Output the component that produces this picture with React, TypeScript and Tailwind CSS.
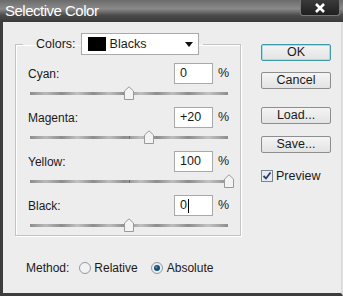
import React from 'react';

const font = "font-['Liberation_Sans',Arial,sans-serif]";

const Slider = ({ pos }: { pos: number }) => (
  <div className="relative ml-[2px] mt-[8px] h-[3px] w-[198px] bg-[linear-gradient(90deg,#8d8d8d,#b9b9b9_8%,#8d8d8d_16%,#c2c2c2_24%,#8d8d8d_32%,#bdbdbd_40%,#8d8d8d_48%,#c0c0c0_56%,#8d8d8d_64%,#bdbdbd_72%,#8d8d8d_80%,#c3c3c3_90%,#8d8d8d)]">
    <div className="absolute left-[99px] top-0 h-[3px] w-px bg-[#6d6d6d]" />
    <svg
      className="absolute top-[-6px]"
      style={{ left: pos - 6 }}
      width="12"
      height="14"
      viewBox="0 0 12 14"
    >
      <path d="M1.5 13.5V5L6 0.8 10.5 5v8.5z" fill="#f3f3f3" stroke="#9a9a9a" />
    </svg>
  </div>
);

const Row = ({ label, value, pos, caret, last }: { label: string; value: string; pos: number; caret?: boolean; last?: boolean }) => (
  <div className="flex flex-col">
    <div className="flex h-[21px] items-center">
      <span className="w-[146px] text-[12px] text-[#1a1a1a]">{label}</span>
      <div className="flex h-[21px] w-[39px] items-center border border-[#a9a9a9] bg-white pl-[5px] text-[12.5px] text-[#1a1a1a]">
        {value}
        {caret && <span className="ml-px h-[14px] w-px bg-black" />}
      </div>
      <span className="ml-[5px] text-[12.5px] text-[#1a1a1a]">%</span>
    </div>
    <Slider pos={pos} />
    <div className={last ? 'h-[8px]' : 'h-[12px]'} />
  </div>
);

const Btn = ({ children, ok }: { children: React.ReactNode; ok?: boolean }) => (
  <button
    className={`h-[17px] w-[70px] rounded-[2px] border text-[12.5px] leading-none text-[#1a1a1a] bg-[linear-gradient(#f4f4f4,#e3e3e3)] ${
      ok ? 'border-[#3c9aa8] shadow-[inset_0_0_0_1px_#a8dde4]' : 'border-[#8e8e8e]'
    }`}
  >
    {children}
  </button>
);

const Radio = ({ on }: { on?: boolean }) => (
  <svg width="12" height="12" viewBox="0 0 12 12">
    <circle cx="6" cy="6" r="5.5" fill={on ? '#e6eef3' : '#f2f2f2'} stroke="#8e9aa2" />
    {on && <circle cx="6" cy="6" r="3" fill="#1e4d73" />}
    {on && <circle cx="5.3" cy="5.3" r="1" fill="#6f9bc0" />}
  </svg>
);

export default function App() {
  return (
    <div className={`${font} flex h-[296px] w-[343px] flex-col bg-[#ededed] border-l-[3px] border-b-[3px] border-r-[2px] border-[#3d3d3d] border-r-[#dcdcdc]`}>
      {/* Title bar */}
      <div className="flex h-[22px] shrink-0 items-start justify-between bg-[linear-gradient(#6b6b6b,#8a8a8a_40%,#4a4a4a_70%,#3a3a3a)] -ml-[3px] -mr-[2px]">
        <span className="ml-[5px] mt-[1px] text-[15px] leading-[20px] tracking-[-0.5px] text-white [font-family:'Liberation_Sans_Narrow','Liberation_Sans',sans-serif]">
          Selective Color
        </span>
        <div className="mr-[3px] flex h-[16px] w-[40px] items-center justify-center rounded-b-[3px] border border-t-0 border-[#777] bg-[linear-gradient(#3a3a3a,#202020)]">
          <svg width="12" height="10" viewBox="0 0 12 10">
            <path d="M2 1l8 8M10 1L2 9" stroke="#fff" strokeWidth="2.6" />
          </svg>
        </div>
      </div>

      <div className="flex flex-1">
        {/* Left column */}
        <div className="flex flex-col">
          <fieldset className="ml-[12px] mt-[11px] w-[226px] border border-[#c3c3c3] pl-[12px] shadow-[inset_1px_1px_0_#fff,1px_1px_0_#fff]">
            <legend className="-ml-[5px] flex items-center pl-[13px] pr-[4px]">
              <span className="mr-[5px] text-[12.5px] text-[#1a1a1a]">Colors:</span>
              <div className="flex h-[22px] w-[118px] items-center border border-[#a9a9a9] bg-white pl-[6px] pr-[5px]">
                <span className="h-[14px] w-[18px] bg-black" />
                <span className="ml-[4px] flex-1 text-[12.5px] text-[#1a1a1a]">Blacks</span>
                <svg width="8" height="5" viewBox="0 0 8 5">
                  <path d="M0 0h8L4 5z" fill="#111" />
                </svg>
              </div>
            </legend>
            <div className="mt-[8px] flex flex-col">
              <Row label="Cyan:" value="0" pos={99} />
              <Row label="Magenta:" value="+20" pos={119} />
              <Row label="Yellow:" value="100" pos={199} />
              <Row label="Black:" value="0" pos={99} caret last />
            </div>
          </fieldset>

          <div className="ml-[23px] mt-[23px] flex items-center text-[12px] text-[#1a1a1a]">
            <span>Method:</span>
            <span className="ml-[10px] flex items-center">
              <Radio />
              <span className="ml-[3px]">Relative</span>
            </span>
            <span className="ml-[13px] flex items-center">
              <Radio on />
              <span className="ml-[4px]">Absolute</span>
            </span>
          </div>
        </div>

        {/* Right column */}
        <div className="ml-[20px] mt-[22px] flex flex-col">
          <Btn ok>OK</Btn>
          <div className="h-[11px]" />
          <Btn>Cancel</Btn>
          <div className="h-[18px]" />
          <Btn>Load...</Btn>
          <div className="h-[12px]" />
          <Btn>Save...</Btn>
          <div className="mt-[14px] flex items-center">
            <svg width="12" height="12" viewBox="0 0 12 12">
              <rect x="0.5" y="0.5" width="11" height="11" fill="#e7ecf2" stroke="#7b8591" />
              <path d="M2.5 6l2.5 2.5 4.5-6" fill="none" stroke="#2b3f66" strokeWidth="1.8" />
            </svg>
            <span className="ml-[3px] text-[12.5px] text-[#1a1a1a]">Preview</span>
          </div>
        </div>
      </div>
    </div>
  );
}
